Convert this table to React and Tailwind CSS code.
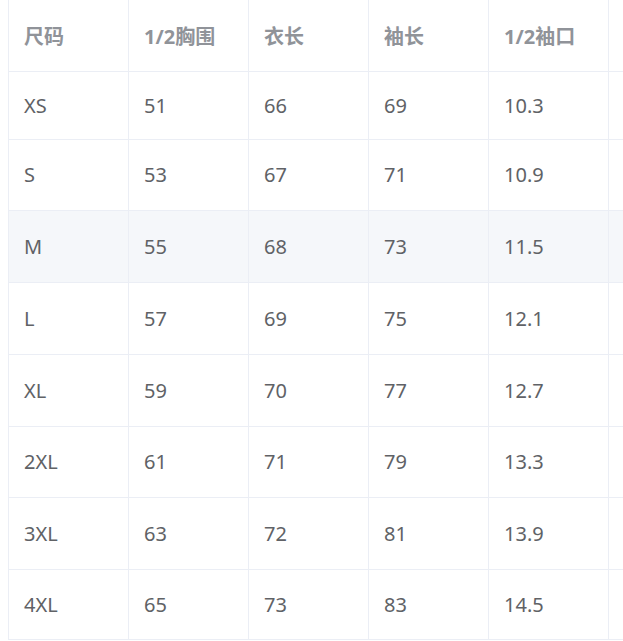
import React from 'react';

const headers = ['尺码', '1/2胸围', '衣长', '袖长', '1/2袖口', ''];

const rows = [
  { size: 'XS', chest: '51', length: '66', sleeve: '69', cuff: '10.3', h: 'h-[68px]' },
  { size: 'S', chest: '53', length: '67', sleeve: '71', cuff: '10.9', h: 'h-[71px]' },
  { size: 'M', chest: '55', length: '68', sleeve: '73', cuff: '11.5', h: 'h-[72px]', hover: true },
  { size: 'L', chest: '57', length: '69', sleeve: '75', cuff: '12.1', h: 'h-[72px]' },
  { size: 'XL', chest: '59', length: '70', sleeve: '77', cuff: '12.7', h: 'h-[72px]' },
  { size: '2XL', chest: '61', length: '71', sleeve: '79', cuff: '13.3', h: 'h-[71px]' },
  { size: '3XL', chest: '63', length: '72', sleeve: '81', cuff: '13.9', h: 'h-[72px]' },
  { size: '4XL', chest: '65', length: '73', sleeve: '83', cuff: '14.5', h: 'h-[70px]' },
];

function Cell({ children, className = '' }) {
  return (
    <div className={`w-[120px] shrink-0 border-l border-[#ebeef5] pl-[15px] flex items-center ${className}`}>
      {children}
    </div>
  );
}

export default function App() {
  return (
    <div
      className="w-[623px] h-[641px] overflow-hidden bg-white pl-2"
      style={{ fontFamily: '"Noto Sans", "Noto Sans CJK SC", sans-serif' }}
    >
      <div className="w-[740px]">
        {/* 表头 */}
        <div className="flex h-[72px] border-b border-[#ebeef5] text-[20px] font-bold text-[#909399]">
          {headers.map((h, i) => (
            <Cell key={i} className="pt-[3px]">{h}</Cell>
          ))}
        </div>

        {/* 数据 */}
        {rows.map((r) => (
          <div
            key={r.size}
            className={`flex ${r.h} border-b border-[#ebeef5] text-[20px] text-[#606266] ${r.hover ? 'bg-[#f5f7fa]' : 'bg-white'}`}
          >
            <Cell>{r.size}</Cell>
            <Cell>{r.chest}</Cell>
            <Cell>{r.length}</Cell>
            <Cell>{r.sleeve}</Cell>
            <Cell>{r.cuff}</Cell>
            <Cell />
          </div>
        ))}
      </div>
    </div>
  );
}
